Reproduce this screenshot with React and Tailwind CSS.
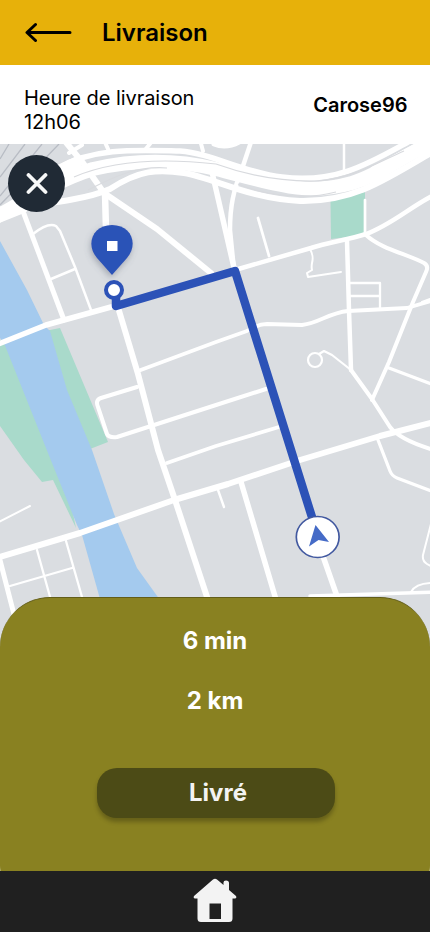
function CityMap() {
  return (
    <svg viewBox="0 144 430 506" className="block h-[506px] w-full shrink-0" fill="none" aria-hidden="true">
      <defs>
        <filter id="pinShadow" x="-50%" y="-50%" width="200%" height="200%">
          <feDropShadow dx="-1" dy="3" stdDeviation="3" floodColor="#555c70" floodOpacity="0.4" />
        </filter>
      </defs>
      <rect y="144" width="430" height="506" fill="#dadde1" />

      {/* parks */}
      <path d="M0 340 L60 328 L108 442 L90 449 L60 450 L76 528 L53 480 L42 482 L24 460 L0 426Z" fill="#a9dacb" />
      <path d="M330.500 201 L365 192 L365 235 L331 239Z" fill="#a9dacb" />

      {/* river */}
      <path d="M0 241 L27 290 L44 325 L50 331 L67 390 L92 450 L114 514 L137 568 L160 600 L160 606 L102 606 L82 535 L77 525 L48 453 L4 343 L0 338Z" fill="#a4caee" />

      {/* railway tracks */}
      <g stroke="#b8bcc4" strokeWidth="1.300">
        <path d="M0 177 L25 144 M0 196 L42 144 M0 205 L59 144 M0 159 L9 144" />
      </g>

      <g stroke="#fff" strokeLinecap="round" strokeLinejoin="round">
        {/* motorway */}
        <path d="M-4 217 C28 199 58 180 93 169 C145 157 187 162 216 169 C275 184 306 196 352 183 C382 174 403 155 434 142" strokeWidth="14" />
        <path d="M-4 210 C38 204 83 201 110 189 C139 170 158 169 184 173 C214 178 247 198 300 201 C352 202 382 182 434 151" strokeWidth="6" />
        <path d="M58 168 C94 147 139 150 180 151 C211 153 245 173 282 177 C336 184 370 163 408 142" strokeWidth="5.500" />
        <path d="M-4 219 L23 208" strokeWidth="10" />
        <path d="M57 172 L77 162 M375 171 L434 140" strokeWidth="11" />

        {/* northern streets */}
        <path d="M64 140 L83 163 L104 193 L157 229 L211 273" strokeWidth="6" />
        <path d="M105 193 L106 230" strokeWidth="6.500" />
        <path d="M104 140 L108 149 M153 140 L145 150 M69 153 L82 145 M200 140 L203 151" strokeWidth="4" />
        <path d="M212 172 L235 272" strokeWidth="5.500" />
        <path d="M251 142 L243 166 C233 191 230 207 230 230 L234 270" strokeWidth="4.500" />
        <path d="M344 143 L344 174" strokeWidth="2.500" />
        <path d="M214 144 Q226 149 239 142" strokeWidth="5" />
        <path d="M235 270 L311 248 C329 242 348 240 366 234 C391 225 410 207 434 195" strokeWidth="4.500" />
        <path d="M365 200 L365 234 M258 218 L269 256" strokeWidth="2.700" />
        <path d="M366 235 C381 249 407 254 424 263 Q429 266 426 272 L413 302 L389 362 L372 400" strokeWidth="4" />
        <path d="M347 241 L349 310 L351 370" strokeWidth="4.500" />
        <path d="M310 249 C316 260 310 262 312 270 L307 273 L308 277 L341 272" strokeWidth="2" />
        <path d="M350 283 H380 V308 M350 296 H380" strokeWidth="2.300" />
        <path d="M422 302 L430 299" strokeWidth="2" />

        {/* riverside district */}
        <path d="M24 214 L64 320" strokeWidth="5" />
        <path d="M33 234 Q48 222 56 226 L60 231 L75 267 L91 310 M51 279 L75 269" strokeWidth="2.500" />
        <path d="M-4 345 L46 325 L111 307" strokeWidth="5.500" />
        <path d="M117 304 L138 374 L158 450 L175 500 L210 606" strokeWidth="6" />
        <path d="M138 371 L216 342 L247 331 Q258 324 267 324 L302 325 C320 323 328 313 348 311 L407 308 L434 300" strokeWidth="3.800" />
        <path d="M137 387 L101 398 Q95 400 98 407 L107 434 Q109 438 117 437 L216 405 L266 389" strokeWidth="4" />
        <path d="M167 463 L216 446 L279 427" strokeWidth="3.800" />

        {/* eastern district */}
        <path d="M351 370 L372 399 L390 427 Q400 440 434 450" strokeWidth="4" />
        <circle cx="315" cy="360" r="7" strokeWidth="2.200" />
        <path d="M319 354 L324 351 L332 355 L351 370" strokeWidth="2.200" />
        <path d="M389 368 L434 385" strokeWidth="3.300" />
        <path d="M-4 558 L80 533 L174 500 L228 484 L300 460 L380 436 L434 422" strokeWidth="6" />
        <path d="M378 440 L390 471 Q392 476 397 478 L434 492" strokeWidth="3.300" />

        {/* southern streets */}
        <path d="M241 482 L277 603 M310 519 L339 602" strokeWidth="5.500" />
        <path d="M218 490 L224 507" strokeWidth="2.400" />
        <path d="M0 560 L18 630" strokeWidth="5" />
        <path d="M-3 523 L30 506" strokeWidth="2" />
        <path d="M37 550 L52 604 M66 541 L84 604 M10 586 L72 568" strokeWidth="2.300" />
        <path d="M310 596 L434 592" strokeWidth="3.500" />
        <path d="M432 520 L423 555 Q422 561 427 564 L434 568 M411 592 Q416 583 434 583" strokeWidth="2" />
      </g>

      {/* lane separators */}
      <g stroke="#d8dade" strokeWidth="1.200">
        <path d="M74 177 C118 158 171 159 216 164 C252 177 283 182 318 181 C353 178 379 162 404 151" />
        <path d="M88 190 C119 174 139 166 167 168 M238 184 C266 196 306 200 336 192" />
      </g>

      {/* route */}
      <path d="M116 291 L116 306 L235 271 L316 530" stroke="#2c52b7" strokeWidth="8.500" strokeLinejoin="round" />
      <circle cx="114" cy="290" r="8" fill="#fff" stroke="#2c52b7" strokeWidth="4" />

      {/* destination pin */}
      <path d="M112 275 L97 258 C85 244 93 225 112 225 C131 225 139 244 127 258Z" fill="#2c52b7" filter="url(#pinShadow)" />
      <rect x="107" y="241" width="10.500" height="10" fill="#fff" />

      {/* vehicle position */}
      <ellipse cx="317.700" cy="537" rx="21.400" ry="20.500" fill="#fff" stroke="#4259a0" strokeWidth="1.700" />
      <path d="M315.500 525 L329 542 L318.500 540 L309 546.500Z" fill="#456bc7" />
    </svg>
  );
}

export default function App() {
  return (
    <div className="flex h-[932px] w-[430px] flex-col overflow-hidden bg-white font-['Inter',sans-serif]">
      <header className="flex h-[65px] shrink-0 items-center bg-[#e7b10a] pl-[25px] text-black">
        <svg viewBox="0 0 48 22" className="h-[22px] w-12" fill="none" stroke="currentColor" strokeWidth="3" strokeLinecap="round" strokeLinejoin="round" aria-label="Retour">
          <path d="M45 10.500 H2.500 M10.500 2.500 L2 10.500 L10.500 18.500" />
        </svg>
        <h1 className="ml-[29px] text-2xl leading-[29px] font-semibold">Livraison</h1>
      </header>

      <section className="flex h-[79px] shrink-0 items-start justify-between pr-[22.5px] pl-6 text-xl leading-6 text-black">
        <p className="pt-[21px] tracking-[-0.05px]">Heure de livraison<br />12h06</p>
        <p className="pt-7 font-semibold">Carose96</p>
      </section>

      <main className="relative flex h-[727px] shrink-0 flex-col overflow-hidden">
        <CityMap />
        <button className="absolute top-[11px] left-2 flex size-[57px] items-center justify-center rounded-full bg-[#202a35]" aria-label="Fermer">
          <svg viewBox="0 0 22 22" className="size-[22px]" stroke="#f7f8f8" strokeWidth="3.800" strokeLinecap="round">
            <path d="M2.500 2 L19.500 19 M19.500 2 L2.500 19" />
          </svg>
        </button>
        <section className="relative -mt-[53px] flex h-[318px] shrink-0 flex-col items-center rounded-[50px] border-t border-[#625d19] bg-[#898121] pt-7 text-2xl leading-[29px] font-bold text-white">
          <p>6 min</p>
          <p className="mt-[31px]">2 km</p>
          <button className="mt-[53px] ml-[2px] flex h-[50px] w-[238px] items-center justify-center rounded-[20px] bg-[#4c4b16] pb-[2px] pl-[4px] text-[#f3f3f3] shadow-[0_4px_4px_rgba(0,0,0,0.25)]">Livré</button>
        </section>
      </main>

      <nav className="flex h-[61px] shrink-0 justify-center bg-[#202020] pt-[7px]">
        <svg viewBox="0 0 44 44" className="size-11" aria-label="Accueil">
          <path fillRule="evenodd" clipRule="evenodd" d="M20 1.500 Q22 0 24 1.500 L30.500 7 V4.500 Q30.500 2.500 33 2.500 Q36 2.500 36 5 V12 L43 18 Q44 20 42 20.500 H39.500 V40.500 Q39.500 44 36 44 H8 Q4.500 44 4.500 40.500 V20.500 H2 Q0 20 1 18Z M16.500 25.500 V41 H28 V25.500Z" fill="#f3f3f3" />
        </svg>
      </nav>
    </div>
  );
}
